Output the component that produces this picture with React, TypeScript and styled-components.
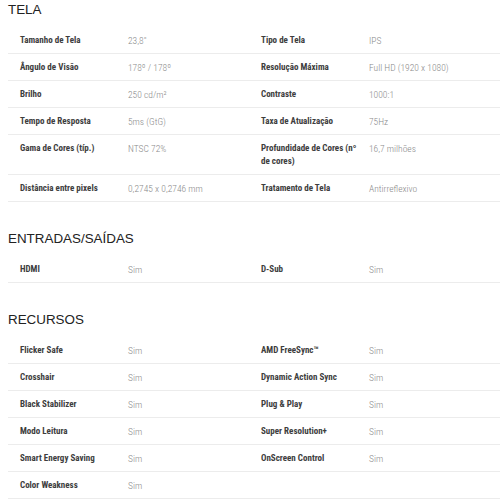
import styled, { createGlobalStyle } from 'styled-components';

type Spec = [string, string];

interface ISection {
  title: string;
  rows: [Spec, Spec | null][];
}

const sections: ISection[] = [
  {
    title: 'TELA',
    rows: [
      [['Tamanho de Tela', '23,8"'], ['Tipo de Tela', 'IPS']],
      [['Ângulo de Visão', '178º / 178º'], ['Resolução Máxima', 'Full HD (1920 x 1080)']],
      [['Brilho', '250 cd/m²'], ['Contraste', '1000:1']],
      [['Tempo de Resposta', '5ms (GtG)'], ['Taxa de Atualização', '75Hz']],
      [['Gama de Cores (típ.)', 'NTSC 72%'], ['Profundidade de Cores (nº de cores)', '16,7 milhões']],
      [['Distância entre pixels', '0,2745 x 0,2746 mm'], ['Tratamento de Tela', 'Antirreflexivo']],
    ],
  },
  {
    title: 'ENTRADAS/SAÍDAS',
    rows: [[['HDMI', 'Sim'], ['D-Sub', 'Sim']]],
  },
  {
    title: 'RECURSOS',
    rows: [
      [['Flicker Safe', 'Sim'], ['AMD FreeSync™', 'Sim']],
      [['Crosshair', 'Sim'], ['Dynamic Action Sync', 'Sim']],
      [['Black Stabilizer', 'Sim'], ['Plug & Play', 'Sim']],
      [['Modo Leitura', 'Sim'], ['Super Resolution+', 'Sim']],
      [['Smart Energy Saving', 'Sim'], ['OnScreen Control', 'Sim']],
      [['Color Weakness', 'Sim'], null],
    ],
  },
];

const App = () => {
  return (
    <>
      <GlobalStyle />
      <Container>
        {sections.map((section, index) => (
          <Section key={section.title} $first={index === 0}>
            <Title>{section.title}</Title>
            <Table>
              {section.rows.map((row, i) => (
                <Row key={i}>
                  {row.map((spec, j) => (
                    <Pair key={j}>
                      {spec && (
                        <>
                          <Label>{spec[0]}</Label>
                          <Value>{spec[1]}</Value>
                        </>
                      )}
                    </Pair>
                  ))}
                </Row>
              ))}
            </Table>
          </Section>
        ))}
      </Container>
    </>
  );
};

export default App;

const GlobalStyle = createGlobalStyle`
  html, body {
    margin: 0;
    background: #ffffff;
    overflow: hidden;
  }
  body {
    font-family: 'Roboto Condensed', 'Liberation Sans', sans-serif;
  }
`;

const Container = styled.div`
  padding-left: 8px;
  width: 492px;
`;

const Section = styled.section<{ $first: boolean }>`
  margin-top: ${({ $first }) => ($first ? '0' : '27px')};
`;

const Title = styled.h2`
  margin: 0 0 7px;
  font-family: 'Liberation Sans', Arial, sans-serif;
  font-size: 13.4px;
  font-weight: 400;
  line-height: 20px;
  color: #222222;
`;

const Table = styled.div`
  display: flex;
  flex-direction: column;
`;

const Row = styled.div`
  display: grid;
  grid-template-columns: 241px 1fr;
  border-bottom: 1px solid #ececec;
`;

const Pair = styled.div`
  display: grid;
  grid-template-columns: 108px 1fr;
  align-items: start;
  padding: 7px 0 6px 12px;
`;

const Label = styled.div`
  padding-right: 8px;
  font-size: 9px;
  font-weight: 700;
  line-height: 13px;
  color: #3d3d3d;
`;

const Value = styled.div`
  font-size: 9.5px;
  font-weight: 300;
  line-height: 13px;
  color: #8a8a8a;
`;
